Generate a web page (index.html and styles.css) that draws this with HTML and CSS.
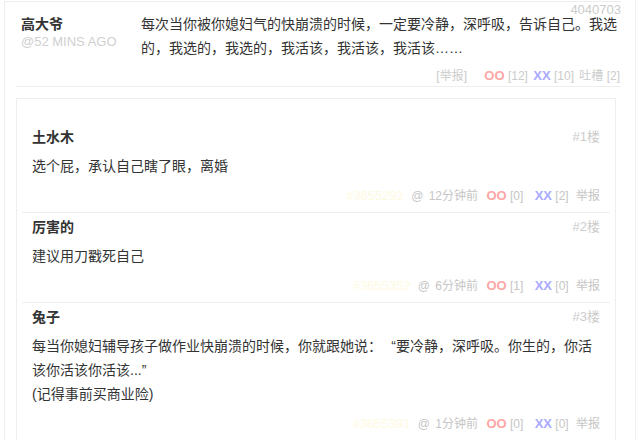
FILE: index.html
```html
<!DOCTYPE HTML>
<html lang="zh-CN">
	<head>
		<meta charset="utf-8">
		<link rel="stylesheet" href="styles.css">
	</head>
	<body>
		<div class="page">
		<div class="post">
			<div class="post-id">4040703</div>
			<div class="post-body">
				<div class="post-row">
					<div class="author">
						<div class="author-name">高大爷</div>
						<div class="author-time">@52 MINS AGO</div>
					</div>
					<div class="post-text">每次当你被你媳妇气的快崩溃的时候，一定要冷静，深呼吸，告诉自己。我选的，我选的，我选的，我活该，我活该，我活该……</div>
				</div>
				<div class="post-foot">
					<span class="report">[举报]</span>
					<span class="oo">OO</span> [12]
					<span class="xx">XX</span> [10]
					<span class="tucao">吐槽 [2]</span>
				</div>
			</div>

			<div class="comments">
				<div class="comment">
					<div class="comment-head">
						<span class="comment-name">土水木</span>
						<span class="floor">#1楼</span>
					</div>
					<div class="comment-text">选个屁，承认自己瞎了眼，离婚</div>
					<div class="comment-foot">
						<span class="cid">#3655292</span>
						<span class="at">@</span> 12分钟前
						<span class="oo">OO</span> [0]
						<span class="xx">XX</span> [2]
						<span class="report">举报</span>
					</div>
				</div>
				<div class="comment">
					<div class="comment-head">
						<span class="comment-name">厉害的</span>
						<span class="floor">#2楼</span>
					</div>
					<div class="comment-text">建议用刀戳死自己</div>
					<div class="comment-foot">
						<span class="cid">#3655352</span>
						<span class="at">@</span> 6分钟前
						<span class="oo">OO</span> [1]
						<span class="xx">XX</span> [0]
						<span class="report">举报</span>
					</div>
				</div>
				<div class="comment">
					<div class="comment-head">
						<span class="comment-name">兔子</span>
						<span class="floor">#3楼</span>
					</div>
					<div class="comment-text">每当你媳妇辅导孩子做作业快崩溃的时候，你就跟她说：<span class="quote">“</span>要冷静，深呼吸。你生的，你活该你活该你活该...”<br>(记得事前买商业险)</div>
					<div class="comment-foot">
						<span class="cid">#3655391</span>
						<span class="at">@</span> 1分钟前
						<span class="oo">OO</span> [0]
						<span class="xx">XX</span> [0]
						<span class="report">举报</span>
					</div>
				</div>
			</div>
		</div>
		<div class="side"></div>
		</div>
	</body>
</html>
```

FILE: styles.css
```css
body {
	margin: 0;
	font-family: "Liberation Sans", "Noto Sans CJK SC", sans-serif;
	color: #333;
	background: #fff;
}

.page {
	display: flex;
	height: 440px;
	overflow: hidden;
}

.side {
	margin-left: 14px;
	border-left: 1px solid #f0f0f0;
	flex: 1;
}

.quote {
	display: inline-block;
	width: 14px;
	text-align: right;
}

.post {
	margin-left: 4px;
	margin-top: 1px;
	width: 616px;
	flex-shrink: 0;
	border-left: 1px solid #eee;
	border-top: 1px solid #eee;
	height: 439px;
	overflow: hidden;
}

.post-id {
	text-align: right;
	font-size: 13px;
	line-height: 14px;
	height: 14px;
	padding-top: 1px;
	color: #ccc;
}

.post-body {
	margin-left: 11px;
	border-bottom: 1px solid #eee;
}

.post-row {
	display: flex;
	margin-top: -5px;
}

.author {
	width: 120px;
	padding-left: 5px;
	padding-top: 2px;
	flex-shrink: 0;
}

.author-name {
	font-size: 14px;
	font-weight: bold;
	line-height: 20px;
}

.author-time {
	font-size: 13px;
	line-height: 16px;
	color: #d0d0d0;
}

.post-text {
	font-size: 14px;
	line-height: 24px;
	width: 479px;
}

.post-foot {
	margin-top: 6px;
	padding-right: 1px;
	font-size: 12px;
	line-height: 20px;
	text-align: right;
	color: #ccc;
}

.post-foot .report {
	margin-right: 14px;
}

.post-foot .xx,
.post-foot .tucao {
	margin-left: 2px;
}

.oo {
	color: #ffa6a6;
	font-weight: bold;
	font-size: 13px;
}

.xx {
	color: #aaaaff;
	font-weight: bold;
	font-size: 13px;
}

.comments {
	margin: 11px 0 0 11px;
	width: 588px;
	border: 1px solid #eee;
	border-bottom: none;
	padding: 24px 5px 0 5px;
	height: 400px;
}

.comment {
	padding: 4px 10px 6px 10px;
	border-bottom: 1px solid #eee;
}

.comment-head {
	display: flex;
	justify-content: space-between;
	line-height: 20px;
}

.comment-name {
	font-size: 14px;
	font-weight: bold;
}

.floor {
	font-size: 13px;
	color: #ccc;
}

.comment-text {
	margin-top: 7px;
	font-size: 14px;
	line-height: 24px;
}

.comment-foot {
	margin-top: 8px;
	font-size: 12px;
	line-height: 20px;
	text-align: right;
	color: #c6c6c6;
}

.cid {
	color: #fefae2;
	font-size: 13px;
}

.at {
	margin-left: 4px;
	margin-right: 2px;
}

.comment-foot .oo {
	margin-left: 5px;
}

.comment-foot .xx {
	margin-left: 8px;
}

.comment-foot .report {
	margin-left: 4px;
}
```
